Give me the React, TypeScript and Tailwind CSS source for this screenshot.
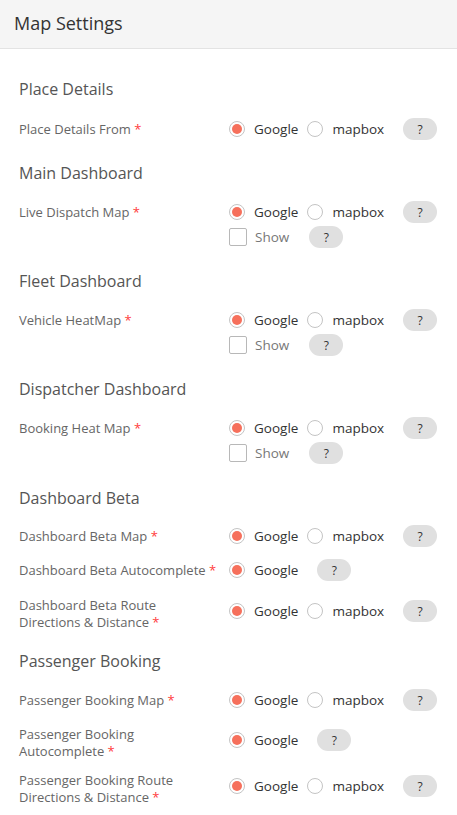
import React from "react";

const Radio = ({ checked, label }: { checked?: boolean; label: string }) => (
  <div className="flex items-center">
    <span className="flex h-[16px] w-[16px] items-center justify-center rounded-full border border-[#c4c4c4] bg-white">
      {checked && <span className="h-[10px] w-[10px] rounded-full bg-[#f6705c]" />}
    </span>
    <span className="ml-[9px] text-[13.5px] leading-[17px] text-[#333]">{label}</span>
  </div>
);

const Help = () => (
  <span className="ml-[10px] flex h-[22px] w-[34px] items-center justify-center rounded-full bg-[#e0e0e0] pt-[1px] text-[12px] leading-none text-[#333]">
    ?
  </span>
);

const Options = ({ mapbox = true }: { mapbox?: boolean }) => (
  <div className="flex h-[24px] items-center gap-[9px]">
    <Radio checked label="Google" />
    {mapbox && <Radio label="mapbox" />}
    <Help />
  </div>
);

const ShowRow = () => (
  <div className="ml-[210px] mt-[1px] flex h-[24px] items-center">
    <span className="h-[18px] w-[18px] rounded-[2px] border border-[#b8b8b8] bg-white" />
    <span className="ml-[8px] text-[13.5px] leading-[17px] text-[#777]">Show</span>
    <span className="ml-[10px] flex">
      <Help />
    </span>
  </div>
);

const Title = ({ children, mt }: { children: React.ReactNode; mt: string }) => (
  <div className={`${mt} text-[16px] leading-[22px] text-[#555]`}>{children}</div>
);

const Req = () => <span className="text-[#ff3b3b]"> *</span>;

const Row = ({
  label,
  mt,
  mapbox = true,
  two = false,
}: {
  label: React.ReactNode;
  mt: string;
  mapbox?: boolean;
  two?: boolean;
}) => (
  <div className={`${mt} flex items-start`}>
    <div
      className={`w-[210px] shrink-0 pr-[10px] text-[13px] leading-[17px] text-[#666] ${
        two ? "pt-0" : "pt-[4px]"
      }`}
    >
      {label}
    </div>
    <div className={two ? "pt-[2px]" : ""}>
      <Options mapbox={mapbox} />
    </div>
  </div>
);

export default function App() {
  return (
    <div
      className="min-h-[815px] w-[457px] bg-white"
      style={{ fontFamily: '"Open Sans", "Noto Sans", sans-serif' }}
    >
      <div className="flex h-[49px] items-center border-b border-[#e3e3e3] bg-[#f5f5f5] pb-[2px] pl-[14px]">
        <span className="text-[18px] leading-[24px] text-[#333]">Map Settings</span>
      </div>
      <div className="px-[19px] pb-[20px]">
        <Title mt="mt-[29px]">Place Details</Title>
        <Row mt="mt-[17px]" label={<>Place Details From<Req /></>} />

        <Title mt="mt-[21px]">Main Dashboard</Title>
        <Row mt="mt-[16px]" label={<>Live Dispatch Map<Req /></>} />
        <ShowRow />

        <Title mt="mt-[21px]">Fleet Dashboard</Title>
        <Row mt="mt-[16px]" label={<>Vehicle HeatMap<Req /></>} />
        <ShowRow />

        <Title mt="mt-[21px]">Dispatcher Dashboard</Title>
        <Row mt="mt-[16px]" label={<>Booking Heat Map<Req /></>} />
        <ShowRow />

        <Title mt="mt-[22px]">Dashboard Beta</Title>
        <Row mt="mt-[15px]" label={<>Dashboard Beta Map<Req /></>} />
        <Row mt="mt-[10px]" mapbox={false} label={<>Dashboard Beta Autocomplete<Req /></>} />
        <Row
          mt="mt-[15px]"
          two
          label={
            <>
              Dashboard Beta Route
              <br />
              Directions &amp; Distance<Req />
            </>
          }
        />

        <Title mt="mt-[19px]">Passenger Booking</Title>
        <Row mt="mt-[16px]" label={<>Passenger Booking Map<Req /></>} />
        <Row
          mt="mt-[14px]"
          two
          mapbox={false}
          label={
            <>
              Passenger Booking
              <br />
              Autocomplete<Req />
            </>
          }
        />
        <Row
          mt="mt-[12px]"
          two
          label={
            <>
              Passenger Booking Route
              <br />
              Directions &amp; Distance<Req />
            </>
          }
        />
      </div>
    </div>
  );
}
